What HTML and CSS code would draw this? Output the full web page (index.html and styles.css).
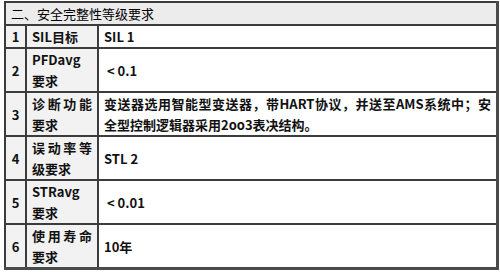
FILE: index.html
```html
<!DOCTYPE html>
<html lang="zh-CN">
<head>
<meta charset="utf-8">
<link rel="stylesheet" href="styles.css">
</head>
<body>
<table class="spec">
  <colgroup>
    <col class="c-no">
    <col class="c-name">
    <col class="c-val">
  </colgroup>
  <tr class="head"><td colspan="3">二、安全完整性等级要求</td></tr>
  <tr><td class="no">1</td><td class="name">SIL目标</td><td class="val">SIL 1</td></tr>
  <tr class="two"><td class="no">2</td><td class="name">PFDavg要求</td><td class="val">&nbsp;&lt; 0.1</td></tr>
  <tr class="two"><td class="no">3</td><td class="name">诊断功能要求</td><td class="val">变送器选用智能型变送器，带HART协议，并送至AMS系统中；安全型控制逻辑器采用2oo3表决结构。</td></tr>
  <tr class="two"><td class="no">4</td><td class="name">误动率等级要求</td><td class="val">STL 2</td></tr>
  <tr class="two"><td class="no">5</td><td class="name">STRavg要求</td><td class="val">&nbsp;&lt; 0.01</td></tr>
  <tr class="two"><td class="no">6</td><td class="name">使用寿命要求</td><td class="val">10年</td></tr>
</table>
</body>
</html>
```
FILE: styles.css
```css
html, body {
  margin: 0;
  padding: 0;
  background: #ffffff;
}
body {
  padding: 1px 1px 0 4px;
  font-family: "Noto Sans CJK SC", "Microsoft YaHei", sans-serif;
  font-size: 13px;
  color: #111;
}
.spec {
  width: 495px;
  border-collapse: collapse;
  table-layout: fixed;
  border-top: 2px solid #3a3a3a;
  border-left: 1px solid #3a3a3a;
  border-right: 3px solid #4a4a4a;
  border-bottom: 3px solid #4a4a4a;
}
.c-no { width: 21px; }
.c-name { width: 72px; }
.spec td {
  border: 2px solid #3c3c3c;
  padding: 0 5px;
  line-height: 21px;
  vertical-align: middle;
  font-weight: bold;
}
.spec tr.two td { height: 42px; }
.spec tr.head td {
  background: #ececec;
  font-weight: normal;
  color: #000;
  padding-left: 5px;
}
.spec td.no {
  background: #f2f2f2;
  text-align: center;
  padding: 0;
}
.spec td.name {
  background: #f2f2f2;
  text-align: justify;
  padding: 0 5px;
}
.spec td.val {
  text-align: justify;
  padding: 0 5px;
}
```
